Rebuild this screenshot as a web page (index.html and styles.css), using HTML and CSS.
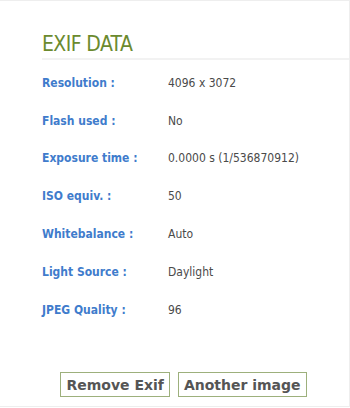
FILE: index.html
```html
<!DOCTYPE html>
<html lang="en">
<head>
  <meta charset="UTF-8" />
  <title>Exif Data</title>
  <link rel="stylesheet" href="styles.css">
</head>
<body>
  <section class="card">
    <h2 class="title">EXIF DATA</h2>
    <table class="exif">
      <tr><th>Resolution :</th><td>4096 x 3072</td></tr>
      <tr><th>Flash used :</th><td>No</td></tr>
      <tr><th>Exposure time :</th><td>0.0000 s (1/536870912)</td></tr>
      <tr><th>ISO equiv. :</th><td>50</td></tr>
      <tr><th>Whitebalance :</th><td>Auto</td></tr>
      <tr><th>Light Source :</th><td>Daylight</td></tr>
      <tr><th>JPEG Quality :</th><td>96</td></tr>
    </table>
    <div class="actions">
      <button class="btn">Remove Exif</button>
      <button class="btn">Another image</button>
    </div>
  </section>
</body>
</html>
```

FILE: styles.css
```css
body {
  margin: 0;
  background: #fff;
  font-family: "DejaVu Sans Condensed", "DejaVu Sans", sans-serif;
}

.card {
  box-sizing: border-box;
  width: 350px;
  height: 407px;
  border: 1px solid #eeeeee;
  border-left: none;
  padding: 31px 24px 0 42px;
}

.title {
  margin: 0 -24px 0 0;
  padding-bottom: 2px;
  font-size: 21px;
  line-height: 24px;
  font-weight: normal;
  letter-spacing: -0.6px;
  color: #6b8a2e;
  border-bottom: 2px solid #f2f2f2;
}

.exif {
  border-collapse: collapse;
  margin-top: 4px;
}

.exif th,
.exif td {
  height: 37.8px;
  padding: 0;
  font-size: 12px;
  text-align: left;
  vertical-align: middle;
}

.exif th {
  width: 126px;
  color: #3f7ccc;
  font-weight: bold;
}

.exif td {
  color: #4a4a4a;
}

.actions {
  display: flex;
  justify-content: center;
  gap: 8px;
  margin-top: 43px;
}

.btn {
  background: #fff;
  border: 1px solid #9db07c;
  padding: 4px 5px 3px;
  font-family: "DejaVu Sans", sans-serif;
  font-size: 14px;
  font-weight: bold;
  color: #555;
}
```
